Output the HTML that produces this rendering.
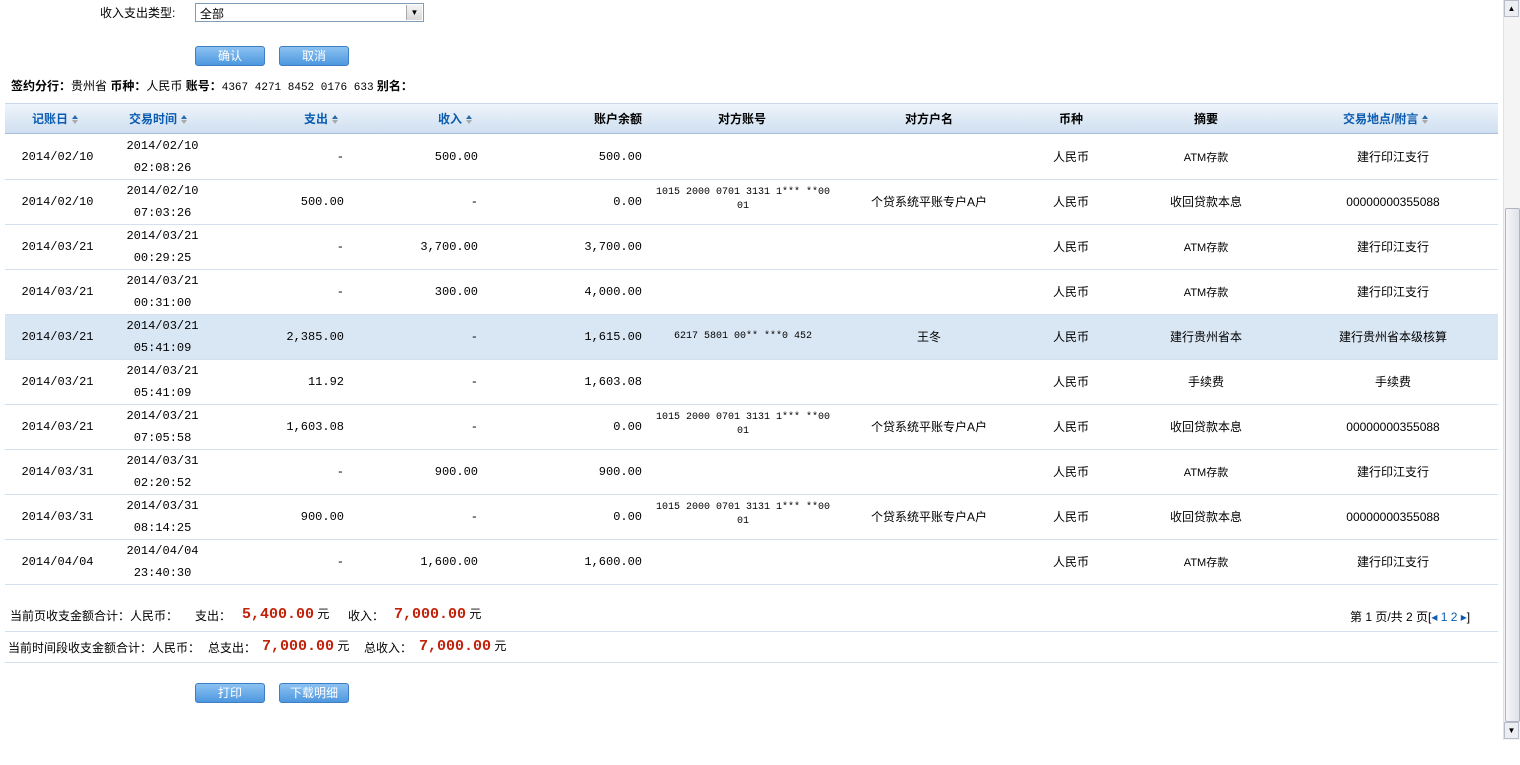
<!DOCTYPE html>
<html><head><meta charset="utf-8"><style>
body{margin:0;width:1520px;height:765px;overflow:hidden;background:#fff;font:12px "Liberation Sans","Noto Sans CJK SC",sans-serif;color:#000;position:relative}
.a{position:absolute;white-space:nowrap}
.btn{position:absolute;width:68px;height:18px;border:1px solid #3d7ec4;border-radius:3px;background:linear-gradient(#8cc2f2,#4d97e0);color:#fff;text-align:center;line-height:18px;font-size:12px}
.hd{position:absolute;left:5px;top:103px;width:1493px;height:29px;background:linear-gradient(#eef4fb,#cfdff0);border-top:1px solid #c9d7e8;border-bottom:1px solid #a9bdd8}
.hd span{position:absolute;top:6px;font-weight:bold;white-space:nowrap}
.bl{color:#0b5cb0}
.ar{display:inline-block;width:7px;height:9px;vertical-align:-1px;margin-left:4px;position:relative}
.ar:before{content:"";position:absolute;left:0;top:0;border-left:3.5px solid transparent;border-right:3.5px solid transparent;border-bottom:4px solid #2a6aa8}
.ar:after{content:"";position:absolute;left:0;top:5px;border-left:3.5px solid transparent;border-right:3.5px solid transparent;border-top:4px solid #aaa}
.row{position:absolute;left:5px;width:1493px;height:44px;border-bottom:1px solid #d4e0ee}
.row div{position:absolute;white-space:nowrap;line-height:22px}
.m{font-family:"Liberation Mono","Noto Sans CJK SC",monospace}
.c{text-align:center}.r{text-align:right}
.red{color:#c1200a;font-weight:bold;font-size:15px;font-family:"Liberation Mono",monospace}
</style></head><body>
<div class="a" style="left:100px;top:4px">收入支出类型:</div>
<div class="a" style="left:195px;top:3px;width:227px;height:17px;border:1px solid #7f9db9;background:#fff"><span style="position:absolute;left:4px;top:1px">全部</span><span style="position:absolute;right:1px;top:1px;width:15px;height:15px;background:linear-gradient(#f4f4f4,#d8d8d8);border-left:1px solid #aaa;font-size:8px;text-align:center;line-height:15px">▼</span></div>
<div class="btn" style="left:195px;top:46px">确认</div>
<div class="btn" style="left:279px;top:46px">取消</div>
<div class="a" style="left:11px;top:77px"><b>签约分行：</b>贵州省 <b>币种：</b>人民币 <b>账号：</b><span style="font-family:'Liberation Mono',monospace;font-size:11px">4367 4271 8452 0176 633</span> <b>别名：</b></div>
<div class="hd">
<span class="bl" style="left:27px">记账日<i class="ar"></i></span>
<span class="bl" style="left:124px">交易时间<i class="ar"></i></span>
<span class="bl" style="left:299px">支出<i class="ar"></i></span>
<span class="bl" style="left:433px">收入<i class="ar"></i></span>
<span style="left:589px">账户余额</span>
<span style="left:713px">对方账号</span>
<span style="left:900px">对方户名</span>
<span style="left:1054px">币种</span>
<span style="left:1189px">摘要</span>
<span class="bl" style="left:1338px">交易地点/附言<i class="ar"></i></span>
</div>
<div id="rows"></div>
<script>
var d=[
["2014/02/10","02:08:26","-","500.00","500.00","","","ATM存款","建行印江支行"],
["2014/02/10","07:03:26","500.00","-","0.00","1015 2000 0701 3131 1*** **00|01","个贷系统平账专户A户","收回贷款本息","00000000355088"],
["2014/03/21","00:29:25","-","3,700.00","3,700.00","","","ATM存款","建行印江支行"],
["2014/03/21","00:31:00","-","300.00","4,000.00","","","ATM存款","建行印江支行"],
["2014/03/21","05:41:09","2,385.00","-","1,615.00","6217 5801 00** ***0 452","王冬","建行贵州省本","建行贵州省本级核算"],
["2014/03/21","05:41:09","11.92","-","1,603.08","","","手续费","手续费"],
["2014/03/21","07:05:58","1,603.08","-","0.00","1015 2000 0701 3131 1*** **00|01","个贷系统平账专户A户","收回贷款本息","00000000355088"],
["2014/03/31","02:20:52","-","900.00","900.00","","","ATM存款","建行印江支行"],
["2014/03/31","08:14:25","900.00","-","0.00","1015 2000 0701 3131 1*** **00|01","个贷系统平账专户A户","收回贷款本息","00000000355088"],
["2014/04/04","23:40:30","-","1,600.00","1,600.00","","","ATM存款","建行印江支行"]];
var h="";
d.forEach(function(r,i){
var t=135+i*45;var bg=i==4?"background:#d9e6f3;":"";
var acc=r[5].indexOf("|")>=0?'<div class="c m" style="left:645px;width:186px;top:6px;line-height:14px;font-size:10px">'+r[5].replace("|","<br>")+'</div>':'<div class="c m" style="left:645px;width:186px;top:11px;font-size:10px">'+r[5]+'</div>';
var sm=r[7]=="ATM存款"?'<span style="font-size:11px">ATM存款</span>':r[7];
h+='<div class="row" style="top:'+t+'px;'+bg+'">'+
'<div class="c m" style="left:0;width:105px;top:11px">'+r[0]+'</div>'+
'<div class="c m" style="left:105px;width:105px;top:0">'+r[0]+'<br>'+r[1]+'</div>'+
'<div class="r m" style="left:200px;width:139px;top:11px">'+r[2]+'</div>'+
'<div class="r m" style="left:340px;width:133px;top:11px">'+r[3]+'</div>'+
'<div class="r m" style="left:480px;width:157px;top:11px">'+r[4]+'</div>'+acc+
'<div class="c" style="left:834px;width:180px;top:11px">'+r[6]+'</div>'+
'<div class="c" style="left:1016px;width:100px;top:11px">人民币</div>'+
'<div class="c" style="left:1130px;width:142px;top:11px">'+sm+'</div>'+
'<div class="c" style="left:1300px;width:176px;top:11px">'+r[8]+'</div></div>';});
document.getElementById("rows").innerHTML=h;
</script>
<div class="a" style="left:10px;top:607px">当前页收支金额合计：人民币：</div>
<div class="a" style="left:195px;top:607px">支出：</div>
<div class="a" style="left:242px;top:605px"><span class="red">5,400.00</span> 元</div>
<div class="a" style="left:348px;top:607px">收入：</div>
<div class="a" style="left:394px;top:605px"><span class="red">7,000.00</span> 元</div>
<div class="a" style="left:1350px;top:608px">第 1 页/共 2 页[<span style="color:#0b5cb0">◂ 1 2 ▸</span>]</div>
<div class="a" style="left:5px;top:631px;width:1493px;border-top:1px solid #d4e0ee"></div>
<div class="a" style="left:8px;top:639px">当前时间段收支金额合计：人民币：</div>
<div class="a" style="left:208px;top:639px">总支出：</div>
<div class="a" style="left:262px;top:637px"><span class="red">7,000.00</span> 元</div>
<div class="a" style="left:364px;top:639px">总收入：</div>
<div class="a" style="left:419px;top:637px"><span class="red">7,000.00</span> 元</div>
<div class="a" style="left:5px;top:662px;width:1493px;border-top:1px solid #d4e0ee"></div>
<div class="btn" style="left:195px;top:683px">打印</div>
<div class="btn" style="left:279px;top:683px">下载明细</div>
<div class="a" style="left:1503px;top:0;width:17px;height:740px;background:#f4f4f4;border-left:1px solid #e2e2e2"></div>
<div class="a" style="left:1504px;top:0;width:15px;height:17px;background:#eceef2;border:1px solid #b8bcc8;box-sizing:border-box;font-size:8px;text-align:center;line-height:15px">▲</div>
<div class="a" style="left:1505px;top:208px;width:13px;height:512px;background:linear-gradient(90deg,#f6f6f8,#dfe2ea);border:1px solid #b0b4c0;border-radius:2px"></div>
<div class="a" style="left:1504px;top:722px;width:15px;height:17px;background:#eceef2;border:1px solid #b8bcc8;box-sizing:border-box;font-size:8px;text-align:center;line-height:15px">▼</div>
</body></html>
